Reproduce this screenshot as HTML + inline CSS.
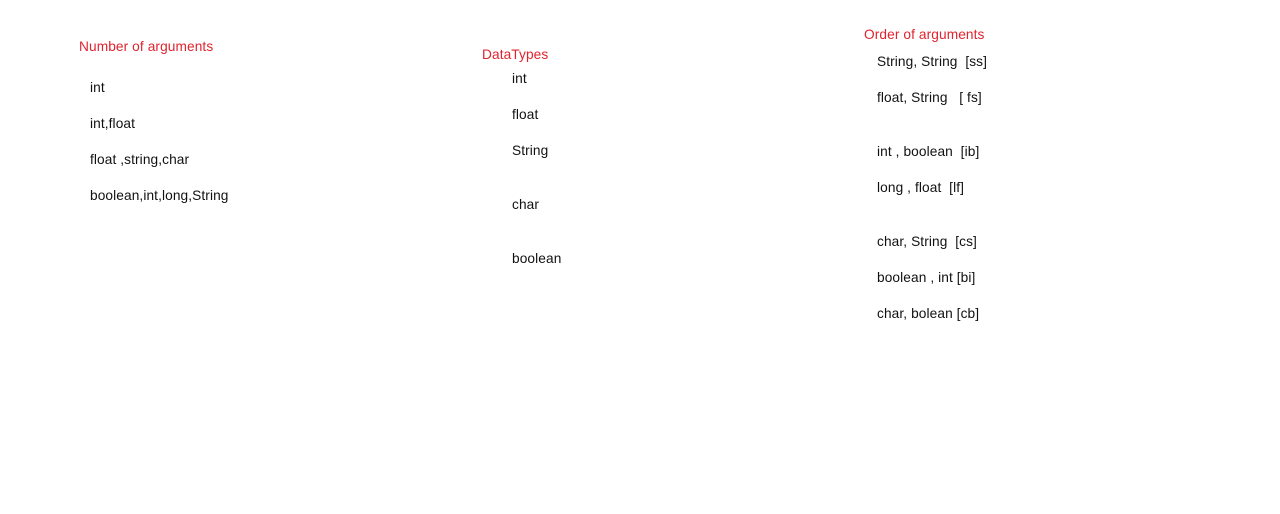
<!DOCTYPE html>
<html><head><style>
body{margin:0;width:1280px;height:514px;background:#fff;position:relative;font-family:"Liberation Sans",sans-serif;font-size:13.7px;letter-spacing:0.1px;color:#111;overflow:hidden}
div{position:absolute;line-height:16px;white-space:pre}
.r{color:#e0232e}
</style></head><body>
<div class="r" style="left:79px;top:39px">Number of arguments</div>
<div style="left:90px;top:80px">int</div>
<div style="left:90px;top:116px">int,float</div>
<div style="left:90px;top:152px">float ,string,char</div>
<div style="left:90px;top:188px">boolean,int,long,String</div>

<div class="r" style="left:482px;top:47px">DataTypes</div>
<div style="left:512px;top:71px">int</div>
<div style="left:512px;top:107px">float</div>
<div style="left:512px;top:143px">String</div>
<div style="left:512px;top:197px">char</div>
<div style="left:512px;top:251px">boolean</div>

<div class="r" style="left:864px;top:27px">Order of arguments</div>
<div style="left:877px;top:54px">String, String  [ss]</div>
<div style="left:877px;top:90px">float, String   [ fs]</div>
<div style="left:877px;top:144px">int , boolean  [ib]</div>
<div style="left:877px;top:180px">long , float  [lf]</div>
<div style="left:877px;top:234px">char, String  [cs]</div>
<div style="left:877px;top:270px">boolean , int [bi]</div>
<div style="left:877px;top:306px">char, bolean [cb]</div>
</body></html>
